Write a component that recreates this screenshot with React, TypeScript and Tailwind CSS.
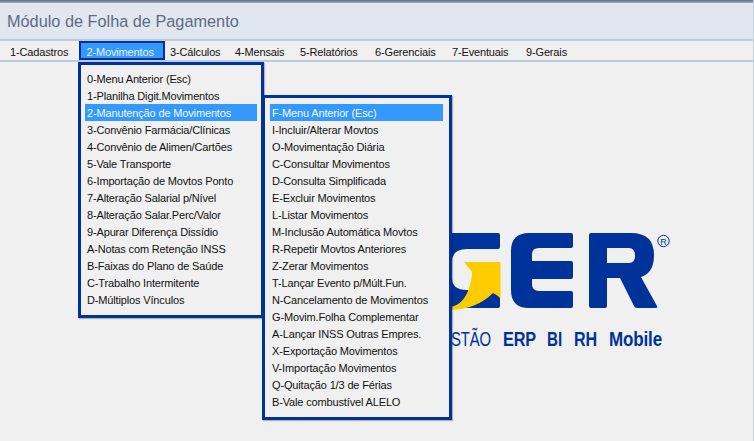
const topMenus = [
  { label: '1-Cadastros', cls: 'w-[79px] pl-[10px]' },
  { label: '2-Movimentos', cls: 'w-[86px] pl-[5.5px]', active: true },
  { label: '3-Cálculos', cls: 'w-[70px] pl-[5px]' },
  { label: '4-Mensais', cls: 'w-[65px]' },
  { label: '5-Relatórios', cls: 'w-[75px]' },
  { label: '6-Gerenciais', cls: 'w-[77px]' },
  { label: '7-Eventuais', cls: 'w-[74px]' },
  { label: '9-Gerais', cls: 'w-[60px]' },
];

const movimentos = [
  '0-Menu Anterior (Esc)',
  '1-Planilha Digit.Movimentos',
  '2-Manutenção de Movimentos',
  '3-Convênio Farmácia/Clínicas',
  '4-Convênio de Alimen/Cartões',
  '5-Vale Transporte',
  '6-Importação de Movtos Ponto',
  '7-Alteração Salarial p/Nível',
  '8-Alteração Salar.Perc/Valor',
  '9-Apurar Diferença Dissídio',
  'A-Notas com Retenção INSS',
  'B-Faixas do Plano de Saúde',
  'C-Trabalho Intermitente',
  'D-Múltiplos Vínculos',
];

const manutencao = [
  'F-Menu Anterior (Esc)',
  'I-Incluir/Alterar Movtos',
  'O-Movimentação Diária',
  'C-Consultar Movimentos',
  'D-Consulta Simplificada',
  'E-Excluir Movimentos',
  'L-Listar Movimentos',
  'M-Inclusão Automática Movtos',
  'R-Repetir Movtos Anteriores',
  'Z-Zerar Movimentos',
  'T-Lançar Evento p/Múlt.Fun.',
  'N-Cancelamento de Movimentos',
  'G-Movim.Folha Complementar',
  'A-Lançar INSS Outras Empres.',
  'X-Exportação Movimentos',
  'V-Importação Movimentos',
  'Q-Quitação 1/3 de Férias',
  'B-Vale combustível ALELO',
];

const Logo = () => (
  <svg width="240" height="130" viewBox="440 225 240 130" fill="#003399">
    {/* G */}
    <path d="M440 233H499Q501 233 501 235V247Q501 249 499 249H468Q453 249 453 262V278Q453 290 468 290H480V291H499Q501 291 501 293V306Q501 308 499 308H440Z" />
    <path d="M465 262H500Q501.5 262 501.5 264V299L499 296L494 293Q478 309 452 310V307Q465 304 470 288Q473 279 473 272Z" fill="#ffcc00" />
    {/* E */}
    <path d="M530 233H572Q574 233 574 235V246Q574 248 572 248H540Q533 248 533 254V261H572Q574 261 574 263V277Q574 279 572 279H533V284Q533 291 540 291H572Q574 291 574 293V306Q574 308 572 308H530Q512 308 512 290V251Q512 233 530 233Z" />
    {/* R */}
    <path
      fillRule="evenodd"
      d="M592 233H632Q655 233 655 255Q655 273 642 277L658 306Q659 308 656 308H638Q636 308 635 306L621 278H608V306Q608 308 606 308H592Q590 308 590 306V235Q590 233 592 233ZM608 248V263H630Q636 263 636 256Q636 248 630 248Z"
    />
    <circle cx="664.5" cy="241" r="5.7" fill="none" stroke="#003399" strokeWidth="1" />
    <text x="664.5" y="244.5" textAnchor="middle" fontSize="9" fontFamily="Liberation Sans, sans-serif">R</text>
    <g fontFamily="Liberation Sans, sans-serif" fontSize="19.5">
      <text x="452" y="346" textLength="40" lengthAdjust="spacingAndGlyphs">STÃO</text>
      <g fontWeight="700">
        <text x="504" y="346" textLength="33" lengthAdjust="spacingAndGlyphs">ERP</text>
        <text x="548" y="346" textLength="15" lengthAdjust="spacingAndGlyphs">BI</text>
        <text x="575" y="346" textLength="23" lengthAdjust="spacingAndGlyphs">RH</text>
        <text x="610" y="346" textLength="53" lengthAdjust="spacingAndGlyphs">Mobile</text>
      </g>
    </g>
  </svg>
);

const Dropdown = ({ items, active, cls }: { items: string[]; active: number; cls: string }) => (
  <ul className={`absolute flex flex-col border-[3px] border-[#003399] bg-[#f0f0f0] shadow-[1px_1px_1px_rgba(0,0,0,0.25)] ${cls}`}>
    {items.map((item, i) => (
      <li
        key={item}
        className={`h-[17px] pt-[1px] pl-[2px] leading-[17px] whitespace-nowrap ${i === active ? 'bg-[#3399ff] text-[#f4f8ff]' : 'text-[#111111]'}`}
      >
        {item}
      </li>
    ))}
  </ul>
);

export default function App() {
  return (
    <div className="relative flex h-[441px] w-[754px] flex-col overflow-hidden border-r border-[#c5d0e0] bg-[#f0f0f0] font-['Liberation_Sans',sans-serif] text-[11px] tracking-[-0.15px]">
      <div className="h-[3px] bg-gradient-to-b from-[#5e6a7d] to-[#a4aebd]" />
      <header className="flex h-[38px] items-center border-b-2 border-[#bfcadb] bg-[#e0e7f1] pl-[7px] text-[16.3px] tracking-normal text-[#5f6b80]">
        Módulo de Folha de Pagamento
      </header>
      <nav className="flex h-[21px] border-b-2 border-[#bccadf] bg-[#f0f0f0]">
        {topMenus.map((m) => (
          <div
            key={m.label}
            className={`${m.cls} whitespace-nowrap ${m.active ? 'border-[2.5px] border-[#003399] bg-[#3399ff] text-[#e9f2ff] leading-[18px]' : 'text-[#111111] leading-[23px]'}`}
          >
            {m.label}
          </div>
        ))}
      </nav>
      <main className="pt-[163px] pl-[439px]">
        <Logo />
      </main>
      <Dropdown items={movimentos} active={2} cls="left-[78px] top-[62px] h-[256px] w-[186px] pt-[5px] px-[4px]" />
      <Dropdown items={manutencao} active={0} cls="left-[262px] top-[95px] h-[325px] w-[190px] pt-[6px] pl-[5px] pr-[6px]" />
    </div>
  );
}
